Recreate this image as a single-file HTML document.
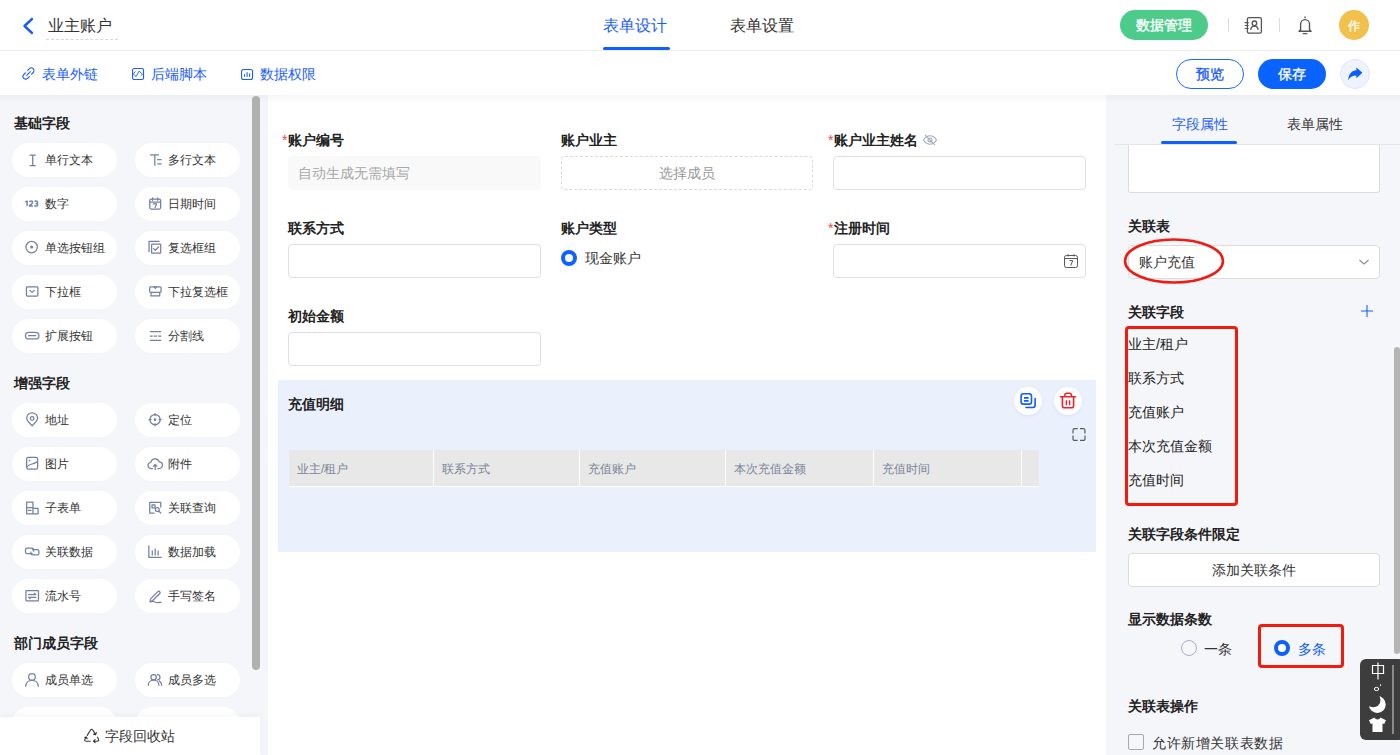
<!DOCTYPE html>
<html><head><meta charset="utf-8">
<style>
*{box-sizing:border-box;margin:0;padding:0}
html,body{width:1400px;height:755px;overflow:hidden;background:#fff;font-family:"Liberation Sans",sans-serif;color:#333}
.a{position:absolute;white-space:nowrap}
.t14{font-size:14px;line-height:14px}
.t12{font-size:12px;line-height:12px}
.t16{font-size:16px;line-height:16px}
svg{display:block}
#hdr{left:0;top:0;width:1400px;height:51px;border-bottom:1px solid #ededed;background:#fff}
#bar2{left:0;top:51px;width:1400px;height:44px;background:#fff}
#lp{left:0;top:95px;width:268px;height:660px;background:#f5f6fa}
#cv{left:268px;top:95px;width:838px;height:660px;background:#fff}
#rp{left:1106px;top:95px;width:294px;height:660px;background:#f5f6fa}
.shadow{position:absolute;left:0;top:95px;width:1400px;height:9px;background:linear-gradient(rgba(0,0,0,0.035),rgba(0,0,0,0))}
.pill{position:absolute;width:105px;height:34px;border-radius:17px;background:#fff}
.pill .ic{position:absolute;left:12px;top:9px}
.pill .tx{position:absolute;left:33px;top:11px;font-size:12px;line-height:12px;color:#333;white-space:nowrap}
.sec{position:absolute;left:14px;font-size:14px;line-height:14px;font-weight:bold;color:#222}
.lbl{position:absolute;font-size:14px;line-height:14px;font-weight:bold;color:#222;white-space:nowrap}
.req{position:absolute;font-size:14px;line-height:14px;color:#e5484d;}
.inp{position:absolute;height:34px;border:1px solid #dfdfdf;border-radius:4px;background:#fff}
.rlbl{position:absolute;left:1128px;font-size:14px;line-height:14px;font-weight:bold;color:#222;white-space:nowrap}
.fld{position:absolute;left:1128px;font-size:14px;line-height:14px;color:#222;white-space:nowrap}
.th{position:absolute;top:450px;height:37px;background:#e8e8e8}
.tht{position:absolute;top:463px;font-size:12px;line-height:12px;color:#7b8497;white-space:nowrap}
</style></head><body>
<div id="hdr" class="a"></div>
<div id="bar2" class="a"></div>
<div id="lp" class="a"></div>
<div id="cv" class="a"></div>
<div id="rp" class="a"></div>
<div class="shadow"></div>

<!-- ===== header ===== -->
<svg class="a" style="left:21px;top:17px" width="14" height="18" viewBox="0 0 14 18"><path d="M11 2 L3.5 9 L11 16" fill="none" stroke="#1a5cff" stroke-width="2.4" stroke-linecap="round" stroke-linejoin="round"/></svg>
<div class="a t16" style="left:48px;top:18px;color:#333">业主账户</div>
<div class="a" style="left:46px;top:39px;width:72px;height:0;border-top:1px dashed #d8d8d8"></div>

<div class="a t16" style="left:603px;top:18px;color:#1a5cff">表单设计</div>
<div class="a" style="left:603px;top:47px;width:67px;height:3px;border-radius:2px;background:#0d5fff"></div>
<div class="a t16" style="left:730px;top:18px;color:#333">表单设置</div>

<div class="a" style="left:1120px;top:10px;width:88px;height:30px;border-radius:15px;background:#4ccb8b"></div>
<div class="a t14" style="left:1136px;top:18px;color:#fff;-webkit-text-stroke:0.35px #fff">数据管理</div>
<div class="a" style="left:1228px;top:18px;width:1px;height:14px;background:#ddd"></div>
<svg class="a" style="left:1244px;top:16px" width="19" height="19" viewBox="0 0 19 19"><rect x="3.4" y="1.6" width="14" height="15.6" rx="1.6" fill="none" stroke="#555" stroke-width="1.3"/><circle cx="10.4" cy="7.3" r="2.3" fill="none" stroke="#555" stroke-width="1.3"/><path d="M6.6 13.8c.4-2.3 1.9-3.6 3.8-3.6s3.4 1.3 3.8 3.6" fill="none" stroke="#555" stroke-width="1.3"/><path d="M0.7 6.6h4M0.7 9.5h4M0.7 12.5h4" stroke="#555" stroke-width="1.2"/></svg>
<div class="a" style="left:1279px;top:18px;width:1px;height:14px;background:#ddd"></div>
<svg class="a" style="left:1296px;top:15px" width="18" height="20" viewBox="0 0 18 20"><path d="M4.6 14.8V9.1a4.45 4.45 0 0 1 8.9 0v5.7l1.6 1.4H3z" fill="none" stroke="#555" stroke-width="1.4" stroke-linejoin="round"/><path d="M9.05 2v.8M7.3 18.6h3.5" fill="none" stroke="#555" stroke-width="1.4" stroke-linecap="round"/></svg>
<div class="a" style="left:1339px;top:10px;width:30px;height:30px;border-radius:15px;background:#f2c14c"></div>
<div class="a t12" style="left:1348px;top:20px;color:#fff;-webkit-text-stroke:0.3px #fff">作</div>

<!-- ===== bar2 ===== -->
<svg class="a" style="left:22px;top:67px" width="13" height="13" viewBox="0 0 13 13"><path d="M5.6 3.4L7.4 1.7a2.6 2.6 0 0 1 3.8 3.8L9.5 7.2M7.4 9.6L5.6 11.3a2.6 2.6 0 0 1-3.8-3.8L3.5 5.8M4.7 8.3L8.3 4.7" fill="none" stroke="#1a5cff" stroke-width="1.1" stroke-linecap="round"/></svg>
<div class="a t14" style="left:42px;top:67px;color:#1a5cff">表单外链</div>
<svg class="a" style="left:132px;top:68px" width="13" height="13" viewBox="0 0 13 13"><rect x="0.55" y="0.55" width="11" height="11" rx="1.6" fill="none" stroke="#1a5cff" stroke-width="1.1"/><path d="M3.2 3.8L1.2 5.8 3 7.8 4.2 8.5 7 3.2 10.5 6 9.5 7.3" fill="none" stroke="#1a5cff" stroke-width="0.9" stroke-linecap="round" stroke-linejoin="round"/></svg>
<div class="a t14" style="left:151px;top:67px;color:#1a5cff">后端脚本</div>
<svg class="a" style="left:241px;top:69px" width="13" height="12" viewBox="0 0 13 12"><rect x="0.55" y="0.55" width="11" height="10" rx="2" fill="none" stroke="#1a5cff" stroke-width="1.1"/><path d="M3.5 5.2v2.6M6.1 3.2v4.6M8.6 4.4v3.4" fill="none" stroke="#1a5cff" stroke-width="1.1"/></svg>
<div class="a t14" style="left:260px;top:67px;color:#1a5cff">数据权限</div>

<div class="a" style="left:1176px;top:59px;width:68px;height:30px;border-radius:15px;border:1px solid #1f66ff;background:#fff"></div>
<div class="a t14" style="left:1196px;top:67px;color:#1a5cff;-webkit-text-stroke:0.35px #1a5cff">预览</div>
<div class="a" style="left:1258px;top:59px;width:68px;height:30px;border-radius:15px;background:#0a62ff"></div>
<div class="a t14" style="left:1278px;top:67px;color:#fff;-webkit-text-stroke:0.35px #fff">保存</div>
<div class="a" style="left:1340px;top:59px;width:30px;height:30px;border-radius:15px;background:#eef3ff;border:1px solid #dfe7fb"></div>
<svg class="a" style="left:1336px;top:55px" width="40" height="40" viewBox="1336 55 40 40"><path d="M1362.4 72.8L1356.4 67.4V70.3C1352 70.6 1348.6 73.8 1348.2 80.2 1350 76.8 1353 75.4 1356.4 75.4V78.2z" fill="#0a5cff"/></svg>

<!-- ===== left panel ===== -->
<div class="sec" style="top:116px">基础字段</div>
<div class="sec" style="top:376px">增强字段</div>
<div class="sec" style="top:636px">部门成员字段</div>
<div class="pill" style="left:12px;top:143px"><div class="ic"><svg width="16" height="16" viewBox="0 0 16 16" ><path d="M5.6 3.2h6.2M8.7 3.2v10.4M5.6 13.6h6.2" fill="none" stroke="#7480a4" stroke-width="1.25" stroke-linecap="butt" stroke-linejoin="round"/></svg></div><div class="tx">单行文本</div></div>
<div class="pill" style="left:135px;top:143px"><div class="ic"><svg width="16" height="16" viewBox="0 0 16 16" ><path d="M3 2.8h9M7.8 2.8v11M10.2 7.6h4.4M10.2 11.9h4.4" fill="none" stroke="#7480a4" stroke-width="1.25" stroke-linecap="butt" stroke-linejoin="round"/></svg></div><div class="tx">多行文本</div></div>
<div class="pill" style="left:12px;top:187px"><div class="ic"><svg width="16" height="16" viewBox="0 0 16 16" ><path d="M1.3 6.1L3.1 5V10.1M5.5 6.1Q5.8 5 7.1 5Q8.6 5 8.6 6.3Q8.6 7.2 7.4 8.1L5.4 9.9H8.9M10.5 5.6Q11 5 12 5Q13.6 5 13.6 6.4Q13.6 7.6 11.9 7.6Q13.8 7.6 13.8 8.8Q13.8 10.2 12 10.2Q10.9 10.2 10.3 9.5" fill="none" stroke="#7882a4" stroke-width="1.45" stroke-linejoin="round"/></svg></div><div class="tx">数字</div></div>
<div class="pill" style="left:135px;top:187px"><div class="ic"><svg width="16" height="16" viewBox="0 0 16 16" ><rect x="2.75" y="3.2" width="10.9" height="9.8" rx="1.5" fill="none" stroke="#7480a4" stroke-width="1.25" stroke-linecap="round" stroke-linejoin="round"/><path d="M5.6 1.9v2.4M10.8 1.9v2.4M2.8 6h10.8M6.4 7.9h3.3L8 11.4" fill="none" stroke="#7480a4" stroke-width="1.25" stroke-linecap="round" stroke-linejoin="round"/></svg></div><div class="tx">日期时间</div></div>
<div class="pill" style="left:12px;top:231px"><div class="ic"><svg width="16" height="16" viewBox="0 0 16 16" ><circle cx="7.65" cy="7.05" r="5.7" fill="none" stroke="#7480a4" stroke-width="1.25" stroke-linecap="round" stroke-linejoin="round"/><circle cx="7.65" cy="7.05" r="1.5" fill="#7480a4"/></svg></div><div class="tx">单选按钮组</div></div>
<div class="pill" style="left:135px;top:231px"><div class="ic"><svg width="16" height="16" viewBox="0 0 16 16" ><path d="M2.05 12V1.45H12.6" fill="none" stroke="#7480a4" stroke-width="1.25" stroke-linecap="butt" stroke-linejoin="round"/><rect x="4.6" y="4.2" width="9.1" height="8.9" rx="0.6" fill="none" stroke="#7480a4" stroke-width="1.25" stroke-linecap="round" stroke-linejoin="round"/><path d="M6.6 8.6l1.7 1.7 3.3-3.3" fill="none" stroke="#7480a4" stroke-width="1.25" stroke-linecap="round" stroke-linejoin="round"/></svg></div><div class="tx">复选框组</div></div>
<div class="pill" style="left:12px;top:275px"><div class="ic"><svg width="16" height="16" viewBox="0 0 16 16" ><rect x="2.45" y="2.85" width="11.4" height="9.2" rx="0.8" fill="none" stroke="#7480a4" stroke-width="1.25" stroke-linecap="round" stroke-linejoin="round"/><path d="M5.9 6.4L8.15 8.4 10.4 6.4" fill="none" stroke="#7480a4" stroke-width="1.25" stroke-linecap="round" stroke-linejoin="round"/></svg></div><div class="tx">下拉框</div></div>
<div class="pill" style="left:135px;top:275px"><div class="ic"><svg width="16" height="16" viewBox="0 0 16 16" ><rect x="2.65" y="2.85" width="11.4" height="5.4" rx="1" fill="none" stroke="#7480a4" stroke-width="1.25" stroke-linecap="round" stroke-linejoin="round"/><path d="M4 8.3v3.6h8.7V8.3M7 2.9l1.35 1.5 1.35-1.5" fill="none" stroke="#7480a4" stroke-width="1.25" stroke-linecap="round" stroke-linejoin="round"/></svg></div><div class="tx">下拉复选框</div></div>
<div class="pill" style="left:12px;top:319px"><div class="ic"><svg width="16" height="16" viewBox="0 0 16 16" ><rect x="1.45" y="4.35" width="13.5" height="6.6" rx="3.3" fill="none" stroke="#7480a4" stroke-width="1.25" stroke-linecap="round" stroke-linejoin="round"/><path d="M4.6 7.65h7.2" fill="none" stroke="#7480a4" stroke-width="1.25" stroke-linecap="round" stroke-linejoin="round"/></svg></div><div class="tx">扩展按钮</div></div>
<div class="pill" style="left:135px;top:319px"><div class="ic"><svg width="16" height="16" viewBox="0 0 16 16" ><path d="M2.9 3.7h11.2M2.9 12.4h11.2" fill="none" stroke="#7480a4" stroke-width="1.25" stroke-linecap="butt" stroke-linejoin="round"/><path d="M2.9 8h2.9M6.9 8h3.2M11.2 8h2.9" fill="none" stroke="#7480a4" stroke-width="1.25" stroke-linecap="butt" stroke-linejoin="round"/></svg></div><div class="tx">分割线</div></div>
<div class="pill" style="left:12px;top:403px"><div class="ic"><svg width="16" height="16" viewBox="0 0 16 16" ><path d="M8.15 13.75C5.4 11.1 2.65 8.7 2.65 6.3a5.5 5.5 0 0 1 11 0c0 2.4-2.75 4.8-5.5 7.45z" fill="none" stroke="#7480a4" stroke-width="1.25" stroke-linecap="round" stroke-linejoin="round"/><circle cx="8.15" cy="6.4" r="1.8" fill="none" stroke="#7480a4" stroke-width="1.25" stroke-linecap="round" stroke-linejoin="round"/></svg></div><div class="tx">地址</div></div>
<div class="pill" style="left:135px;top:403px"><div class="ic"><svg width="16" height="16" viewBox="0 0 16 16" ><circle cx="8.05" cy="7.65" r="5.1" fill="none" stroke="#7480a4" stroke-width="1.25" stroke-linecap="round" stroke-linejoin="round"/><circle cx="8.05" cy="7.65" r="1.3" fill="#7480a4"/><path d="M8.05 1.6v2M8.05 11.7v2M2 7.65h2M12.1 7.65h2" fill="none" stroke="#7480a4" stroke-width="1.25" stroke-linecap="round" stroke-linejoin="round"/></svg></div><div class="tx">定位</div></div>
<div class="pill" style="left:12px;top:447px"><div class="ic"><svg width="16" height="16" viewBox="0 0 16 16" ><rect x="2.65" y="1.25" width="11" height="11.9" rx="1.6" fill="none" stroke="#7480a4" stroke-width="1.25" stroke-linecap="round" stroke-linejoin="round"/><path d="M3 10.6C5.2 8 8.2 8.8 13.4 5.6M5.2 4.2l.6.6" fill="none" stroke="#7480a4" stroke-width="1.25" stroke-linecap="round" stroke-linejoin="round"/></svg></div><div class="tx">图片</div></div>
<div class="pill" style="left:135px;top:447px"><div class="ic"><svg width="16" height="16" viewBox="0 0 16 16" ><path d="M5.4 12.5H4.4A3.1 3.1 0 0 1 3.9 6.3 4.3 4.3 0 0 1 12.2 5.8 3.3 3.3 0 0 1 12 12.5h-1.3" fill="none" stroke="#7480a4" stroke-width="1.25" stroke-linecap="round" stroke-linejoin="round"/><path d="M8.15 13.4V8.5M6.4 10.2l1.75-1.75 1.75 1.75" fill="none" stroke="#7480a4" stroke-width="1.25" stroke-linecap="round" stroke-linejoin="round"/></svg></div><div class="tx">附件</div></div>
<div class="pill" style="left:12px;top:491px"><div class="ic"><svg width="16" height="16" viewBox="0 0 16 16" ><path d="M2.65 2.15h6.3v11.7H2.65zM2.65 7.6h6.3M4.4 10.4h2.6M8.95 8.3h5.1v5.55H8.95" fill="none" stroke="#7480a4" stroke-width="1.25" stroke-linecap="round" stroke-linejoin="round"/></svg></div><div class="tx">子表单</div></div>
<div class="pill" style="left:135px;top:491px"><div class="ic"><svg width="16" height="16" viewBox="0 0 16 16" ><path d="M13.75 7V2.45H2.75v10.6H7" fill="none" stroke="#7480a4" stroke-width="1.25" stroke-linecap="round" stroke-linejoin="round"/><path d="M5 4.8h3v3H5z" fill="none" stroke="#7480a4" stroke-width="1.25" stroke-linecap="round" stroke-linejoin="round"/><circle cx="10.3" cy="9.6" r="1.9" fill="none" stroke="#7480a4" stroke-width="1.25" stroke-linecap="round" stroke-linejoin="round"/><path d="M11.7 11l2 2" fill="none" stroke="#7480a4" stroke-width="1.25" stroke-linecap="round" stroke-linejoin="round"/></svg></div><div class="tx">关联查询</div></div>
<div class="pill" style="left:12px;top:535px"><div class="ic"><svg width="16" height="16" viewBox="0 0 16 16" ><path d="M8.2 9.65H3a1.5 1.5 0 0 1-1.5-1.5v-2.5A1.5 1.5 0 0 1 3 4.15h5A1.5 1.5 0 0 1 9.5 5.65v1.5" fill="none" stroke="#7480a4" stroke-width="1.25" stroke-linecap="round" stroke-linejoin="round"/><path d="M8.4 5.6h5A1.5 1.5 0 0 1 14.9 7.1v2.3a1.5 1.5 0 0 1-1.5 1.5h-5A1.5 1.5 0 0 1 6.9 9.4V8" fill="none" stroke="#7480a4" stroke-width="1.25" stroke-linecap="round" stroke-linejoin="round"/></svg></div><div class="tx">关联数据</div></div>
<div class="pill" style="left:135px;top:535px"><div class="ic"><svg width="16" height="16" viewBox="0 0 16 16" ><path d="M1.85 1.6V13.45H14.6" fill="none" stroke="#7480a4" stroke-width="1.25" stroke-linecap="butt" stroke-linejoin="round"/><path d="M5.3 6.5v5M8.2 4.6v6.9M11.1 6.5v5" fill="none" stroke="#7480a4" stroke-width="1.25" stroke-linecap="butt" stroke-linejoin="round"/></svg></div><div class="tx">数据加载</div></div>
<div class="pill" style="left:12px;top:579px"><div class="ic"><svg width="16" height="16" viewBox="0 0 16 16" ><rect x="1.95" y="2.55" width="12.5" height="10.4" rx="0.6" fill="none" stroke="#7480a4" stroke-width="1.25" stroke-linecap="round" stroke-linejoin="round"/><path d="M4.6 6.5h7.2l-1.6-1.4M11.8 9.3H4.6l1.6 1.4" fill="none" stroke="#7480a4" stroke-width="1.25" stroke-linecap="round" stroke-linejoin="round"/></svg></div><div class="tx">流水号</div></div>
<div class="pill" style="left:135px;top:579px"><div class="ic"><svg width="16" height="16" viewBox="0 0 16 16" ><path d="M3.6 10.9L10.9 3.6a1.35 1.35 0 0 1 1.9 1.9L5.5 12.8 3.2 13.2z" fill="none" stroke="#7480a4" stroke-width="1.25" stroke-linecap="round" stroke-linejoin="round"/><path d="M3 14c1.6-.9 3.3-.9 5 0s3.3.8 6 .1" fill="none" stroke="#7480a4" stroke-width="1.25" stroke-linecap="round" stroke-linejoin="round"/></svg></div><div class="tx">手写签名</div></div>
<div class="pill" style="left:12px;top:663px"><div class="ic"><svg width="16" height="16" viewBox="0 0 16 16" ><circle cx="8" cy="4.9" r="3.3" fill="none" stroke="#7480a4" stroke-width="1.25" stroke-linecap="round" stroke-linejoin="round"/><path d="M1.8 14.2c0-3.5 2.7-5.9 6.2-5.9s6.2 2.4 6.2 5.9" fill="none" stroke="#7480a4" stroke-width="1.25" stroke-linecap="round" stroke-linejoin="round"/></svg></div><div class="tx">成员单选</div></div>
<div class="pill" style="left:135px;top:663px"><div class="ic"><svg width="16" height="16" viewBox="0 0 16 16" ><circle cx="6.6" cy="5.2" r="2.7" fill="none" stroke="#7480a4" stroke-width="1.25" stroke-linecap="round" stroke-linejoin="round"/><path d="M1.3 13.3c0-3 2.3-5.1 5.3-5.1s5.3 2.1 5.3 5.1M10.3 2.6a2.6 2.6 0 0 1 .2 5.2M12.3 8.9c1.4.8 2.3 2.4 2.3 4.4" fill="none" stroke="#7480a4" stroke-width="1.25" stroke-linecap="round" stroke-linejoin="round"/></svg></div><div class="tx">成员多选</div></div>
<div class="pill" style="left:12px;top:707px"><div class="ic"><svg width="16" height="16" viewBox="0 0 16 16" ><circle cx="8" cy="4.9" r="3.3" fill="none" stroke="#7480a4" stroke-width="1.25" stroke-linecap="round" stroke-linejoin="round"/><path d="M1.8 14.2c0-3.5 2.7-5.9 6.2-5.9s6.2 2.4 6.2 5.9" fill="none" stroke="#7480a4" stroke-width="1.25" stroke-linecap="round" stroke-linejoin="round"/></svg></div><div class="tx">成员单选</div></div>
<div class="pill" style="left:135px;top:707px"><div class="ic"><svg width="16" height="16" viewBox="0 0 16 16" ><circle cx="6.6" cy="5.2" r="2.7" fill="none" stroke="#7480a4" stroke-width="1.25" stroke-linecap="round" stroke-linejoin="round"/><path d="M1.3 13.3c0-3 2.3-5.1 5.3-5.1s5.3 2.1 5.3 5.1M10.3 2.6a2.6 2.6 0 0 1 .2 5.2M12.3 8.9c1.4.8 2.3 2.4 2.3 4.4" fill="none" stroke="#7480a4" stroke-width="1.25" stroke-linecap="round" stroke-linejoin="round"/></svg></div><div class="tx">成员多选</div></div>

<div class="a" style="left:252px;top:96px;width:8px;height:574px;border-radius:4px;background:#b0b0b0"></div>
<div class="a" style="left:0;top:717px;width:260px;height:38px;background:#fff;box-shadow:0 -2px 6px rgba(0,0,0,0.04)"></div>
<svg class="a" style="left:80px;top:724px" width="24" height="22" viewBox="80 724 24 22"><path d="M87.2 735.4L90.6 730Q91.7 728.6 92.8 730L95.5 734.4M93.4 734.2L95.6 734.8 96.3 732.6M97.5 737.2L98.5 739Q99.2 741.2 97 741.2H93.6M95.1 739.7L93.5 741.2 95.1 742.7M90.3 741.2H86.3Q84.1 741.2 84.9 739.3L86.2 737.2M84.8 737.6L86.3 736.9 87.2 738.7" fill="none" stroke="#333" stroke-width="1.1" stroke-linecap="round" stroke-linejoin="round"/></svg>
<div class="a t14" style="left:105px;top:729px;color:#333">字段回收站</div>

<!-- ===== canvas ===== -->
<div class="req" style="left:282px;top:133px">*</div>
<div class="lbl" style="left:288px;top:133px">账户编号</div>
<div class="inp" style="left:288px;top:156px;width:253px;background:#f9f9f9;border-color:#f9f9f9"></div>
<div class="a t14" style="left:298px;top:166px;color:#a8a8a8">自动生成无需填写</div>

<div class="lbl" style="left:561px;top:133px">账户业主</div>
<div class="inp" style="left:561px;top:156px;width:252px;border:1px dashed #dadada"></div>
<div class="a t14" style="left:659px;top:166px;color:#9a9a9a">选择成员</div>

<div class="req" style="left:828px;top:133px">*</div>
<div class="lbl" style="left:834px;top:133px">账户业主姓名</div>
<svg class="a" style="left:922px;top:133px" width="16" height="14" viewBox="0 0 16 14"><path d="M1.5 7C3.2 4.2 5.4 2.8 8 2.8s4.8 1.4 6.5 4.2C12.8 9.8 10.6 11.2 8 11.2S3.2 9.8 1.5 7z" fill="none" stroke="#a3abc2" stroke-width="1.1"/><circle cx="8" cy="7" r="2" fill="none" stroke="#a3abc2" stroke-width="1.1"/><path d="M3 1.8l10 10.4" stroke="#a3abc2" stroke-width="1.1"/></svg>
<div class="inp" style="left:833px;top:156px;width:253px"></div>

<div class="lbl" style="left:288px;top:221px">联系方式</div>
<div class="inp" style="left:288px;top:244px;width:253px"></div>
<div class="lbl" style="left:561px;top:221px">账户类型</div>
<div class="a" style="left:561px;top:250px;width:16px;height:16px;border-radius:8px;border:4.5px solid #0d63ff;background:#fff"></div>
<div class="a t14" style="left:585px;top:251px;color:#333">现金账户</div>
<div class="req" style="left:828px;top:221px">*</div>
<div class="lbl" style="left:834px;top:221px">注册时间</div>
<div class="inp" style="left:833px;top:244px;width:253px"></div>
<svg class="a" style="left:1063px;top:253px" width="16" height="16" viewBox="0 0 16 16"><rect x="1.5" y="2.5" width="13" height="12" rx="1.8" fill="none" stroke="#5a5a5a" stroke-width="1"/><path d="M1.5 5.5h13M5 1.2v2.3M11 1.2v2.3M6.3 7.6h3.4L7.8 12.6" fill="none" stroke="#5a5a5a" stroke-width="1"/></svg>

<div class="lbl" style="left:288px;top:309px">初始金额</div>
<div class="inp" style="left:288px;top:332px;width:253px"></div>

<div class="a" style="left:278px;top:380px;width:818px;height:172px;background:#eaf1fd"></div>
<div class="lbl" style="left:288px;top:397px">充值明细</div>
<div class="a" style="left:1014px;top:387px;width:28px;height:28px;border-radius:14px;background:#fff;box-shadow:0 1px 3px rgba(60,110,230,0.12)"></div>
<svg class="a" style="left:1010px;top:383px" width="80" height="62" viewBox="1010 383 80 62"><rect x="1021.1" y="393.7" width="10.4" height="10.4" rx="2.4" fill="none" stroke="#0d5cff" stroke-width="1.6"/><path d="M1024 397.9h4.6M1024 400.8h4.6" stroke="#0d5cff" stroke-width="1.7"/><path d="M1035.1 398.6V405.3a2.2 2.2 0 0 1-2.2 2.2H1026" fill="none" stroke="#0d5cff" stroke-width="1.6" stroke-linecap="round"/></svg>
<div class="a" style="left:1054px;top:387px;width:28px;height:28px;border-radius:14px;background:#fff;box-shadow:0 1px 3px rgba(60,110,230,0.12)"></div>
<svg class="a" style="left:1050px;top:383px" width="40" height="40" viewBox="1050 383 40 40"><path d="M1060.5 396.7h14.8" stroke="#f3202b" stroke-width="1.6" stroke-linecap="round"/><path d="M1064.8 396.5v-1.2a2 2 0 0 1 2-2h2.6a2 2 0 0 1 2 2v1.2" fill="none" stroke="#f3202b" stroke-width="1.5"/><path d="M1062.4 397v8.8a2 2 0 0 0 2 2h7.2a2 2 0 0 0 2-2V397" fill="none" stroke="#f3202b" stroke-width="1.6"/><path d="M1066.4 400.3v5M1069.6 400.3v5" stroke="#f3202b" stroke-width="1.5"/></svg>
<svg class="a" style="left:1070px;top:426px" width="18" height="17" viewBox="1070 426 18 17"><path d="M1073 433.5v-3.3a1.5 1.5 0 0 1 1.5-1.5h3.2M1080 428.7h3.4a1.5 1.5 0 0 1 1.5 1.5v3.3M1085 435.5v3.4a1.5 1.5 0 0 1-1.5 1.5H1080M1077.7 440.4h-3.2a1.5 1.5 0 0 1-1.5-1.5v-3.4" fill="none" stroke="#5a5a5a" stroke-width="1.2"/></svg>

<div class="th" style="left:289px;width:750px;border-bottom:1px solid #fff"></div>
<div class="a" style="left:433px;top:450px;width:1px;height:36px;background:#fff"></div>
<div class="a" style="left:579px;top:450px;width:1px;height:36px;background:#fff"></div>
<div class="a" style="left:725px;top:450px;width:1px;height:36px;background:#fff"></div>
<div class="a" style="left:873px;top:450px;width:1px;height:36px;background:#fff"></div>
<div class="a" style="left:1021px;top:450px;width:1px;height:36px;background:#fff"></div>
<div class="tht" style="left:297px">业主/租户</div>
<div class="tht" style="left:442px">联系方式</div>
<div class="tht" style="left:588px">充值账户</div>
<div class="tht" style="left:734px">本次充值金额</div>
<div class="tht" style="left:882px">充值时间</div>

<!-- ===== right panel ===== -->
<div class="a" style="left:1114px;top:144px;width:286px;height:1px;background:#e4e6ea"></div>
<div class="a t14" style="left:1172px;top:117px;color:#1a5cff">字段属性</div>
<div class="a" style="left:1161px;top:141px;width:76px;height:3px;border-radius:2px;background:#0d5fff"></div>
<div class="a t14" style="left:1287px;top:117px;color:#333">表单属性</div>
<div class="a" style="left:1128px;top:145px;width:252px;height:48px;background:#fff;border:1px solid #dcdcdc;border-top:none;border-radius:0 0 3px 3px"></div>

<div class="rlbl" style="top:219px">关联表</div>
<div class="a" style="left:1128px;top:245px;width:252px;height:34px;background:#fff;border:1px solid #dcdcdc;border-radius:4px"></div>
<div class="a t14" style="left:1139px;top:255px;color:#333">账户充值</div>
<svg class="a" style="left:1358px;top:257px" width="12" height="10" viewBox="0 0 12 10"><path d="M1.5 3l4.5 4 4.5-4" fill="none" stroke="#8a8a8a" stroke-width="1.1"/></svg>
<svg class="a" style="left:1122px;top:237px" width="105" height="48" viewBox="0 0 105 48"><ellipse cx="52" cy="24" rx="49" ry="21.5" fill="none" stroke="#ee1c14" stroke-width="2.6"/></svg>

<div class="rlbl" style="top:305px">关联字段</div>
<svg class="a" style="left:1360px;top:304px" width="14" height="14" viewBox="0 0 14 14"><path d="M7 1v12M1 7h12" stroke="#1a5cff" stroke-width="1.1"/></svg>
<div class="a" style="left:1125px;top:326px;width:113px;height:180px;border:3px solid #f41a0e;border-radius:4px"></div>
<div class="fld" style="top:337px">业主/租户</div>
<div class="fld" style="top:371px">联系方式</div>
<div class="fld" style="top:405px">充值账户</div>
<div class="fld" style="top:439px">本次充值金额</div>
<div class="fld" style="top:473px">充值时间</div>

<div class="rlbl" style="top:527px">关联字段条件限定</div>
<div class="a" style="left:1128px;top:553px;width:252px;height:34px;background:#fff;border:1px solid #dcdcdc;border-radius:4px"></div>
<div class="a t14" style="left:1212px;top:563px;color:#333">添加关联条件</div>

<div class="rlbl" style="top:612px">显示数据条数</div>
<div class="a" style="left:1181px;top:640px;width:16px;height:16px;border-radius:8px;border:1px solid #a9b0c6;background:transparent"></div>
<div class="a t14" style="left:1204px;top:642px;color:#333">一条</div>
<div class="a" style="left:1258px;top:624px;width:86px;height:44px;border:3px solid #f41a0e;border-radius:4px"></div>
<div class="a" style="left:1274px;top:640px;width:16px;height:16px;border-radius:8px;border:4px solid #0d5fff;background:#fff"></div>
<div class="a t14" style="left:1298px;top:642px;color:#0d5cff">多条</div>

<div class="rlbl" style="top:699px">关联表操作</div>
<div class="a" style="left:1128px;top:734px;width:16px;height:16px;border:1px solid #a6a8b4;border-radius:2px;background:transparent"></div>
<div class="a" style="left:1152px;top:736px;color:#333;letter-spacing:0.6px;font-size:14.4px;line-height:15px">允许新增关联表数据</div>

<div class="a" style="left:1394px;top:347px;width:6px;height:307px;border-radius:3px;background:#b5b5b5"></div>
<!-- IME bar -->
<div class="a" style="left:1360px;top:659px;width:45px;height:81px;border-radius:6px;background:#3d3d3d"></div>
<div class="a" style="left:1392px;top:665px;width:2px;height:69px;background:#8a8a8a"></div>
<svg class="a" style="left:1370px;top:660px" width="16" height="22" viewBox="0 0 16 22"><path d="M2.5 5.5h11v8h-11zM8 2.5v17" fill="none" stroke="#fff" stroke-width="1.2"/></svg>
<svg class="a" style="left:1372px;top:682px" width="12" height="12" viewBox="0 0 12 12"><ellipse cx="4.5" cy="7" rx="2.2" ry="1.6" fill="none" stroke="#fff" stroke-width="1"/><path d="M8 2.2c.8.3 1 1.3.2 2" fill="none" stroke="#fff" stroke-width="1"/></svg>
<svg class="a" style="left:1366px;top:694px" width="22" height="22" viewBox="0 0 22 22"><circle cx="11.3" cy="10.5" r="8.4" fill="#fff"/><circle cx="7.2" cy="6.0" r="7.3" fill="#3d3d3d"/></svg>
<svg class="a" style="left:1368px;top:717px" width="19" height="16" viewBox="0 0 19 16"><path d="M6.5 0.5L1 3.2 2.8 7 4.5 6.5V15h10V6.5l1.7.5L18 3.2 12.5 0.5C12 1.8 10.9 2.5 9.5 2.5S7 1.8 6.5 0.5z" fill="#fff"/></svg>
</body></html>
